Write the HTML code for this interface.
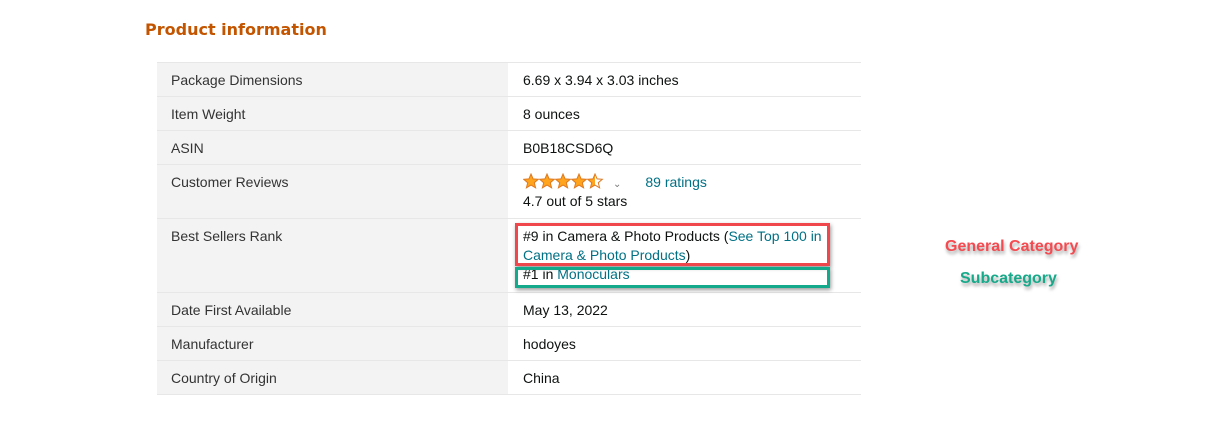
<!DOCTYPE html>
<html><head><style>
body{margin:0;width:1212px;height:424px;background:#fff;font-family:"Liberation Sans",Arial,sans-serif;position:relative;overflow:hidden}
h2{position:absolute;left:145px;top:20px;margin:0;font-size:16px;font-weight:bold;color:#c45500;font-family:"DejaVu Sans","Liberation Sans",sans-serif;letter-spacing:0}
table{position:absolute;left:157px;top:62px;border-collapse:collapse;width:704px;font-size:14px}
td{border-top:1px solid #e7e7e7;border-bottom:1px solid #e7e7e7;vertical-align:top;padding:8px 14px 0 14px;line-height:19px}
td.l{background:#f3f3f3;color:#333;width:323px}
td.v{color:#0f1111;padding-left:15px}
a{color:#007185;text-decoration:none}
.box{position:absolute;border:3px solid;box-shadow:1px 2px 4px rgba(0,0,0,.4)}
.ann{position:absolute;font-weight:bold;font-size:16px;text-shadow:1px 3px 3px rgba(0,0,0,.35)}
</style></head><body>
<h2>Product information</h2>
<table>
<tr style="height:34px"><td class="l">Package Dimensions</td><td class="v">6.69 x 3.94 x 3.03 inches</td></tr>
<tr style="height:34px"><td class="l">Item Weight</td><td class="v">8 ounces</td></tr>
<tr style="height:34px"><td class="l">ASIN</td><td class="v">B0B18CSD6Q</td></tr>
<tr style="height:54px"><td class="l">Customer Reviews</td><td class="v"><div style="height:19px;line-height:19px;white-space:nowrap"><svg width="82" height="17" viewBox="0 0 82 17" style="vertical-align:-3px">
<defs><linearGradient id="h"><stop offset="50%" stop-color="#ffa41c"/><stop offset="50%" stop-color="#fff"/></linearGradient></defs>
<g stroke="#de7921" stroke-width="1">
<path fill="#ffa41c" d="M8 1l2.1 4.9 5.2.4-4 3.4 1.3 5.1L8 12.1l-4.6 2.7 1.3-5.1-4-3.4 5.2-.4z"/>
<path fill="#ffa41c" transform="translate(16 0)" d="M8 1l2.1 4.9 5.2.4-4 3.4 1.3 5.1L8 12.1l-4.6 2.7 1.3-5.1-4-3.4 5.2-.4z"/>
<path fill="#ffa41c" transform="translate(32 0)" d="M8 1l2.1 4.9 5.2.4-4 3.4 1.3 5.1L8 12.1l-4.6 2.7 1.3-5.1-4-3.4 5.2-.4z"/>
<path fill="#ffa41c" transform="translate(48 0)" d="M8 1l2.1 4.9 5.2.4-4 3.4 1.3 5.1L8 12.1l-4.6 2.7 1.3-5.1-4-3.4 5.2-.4z"/>
<path fill="url(#h)" transform="translate(64 0)" d="M8 1l2.1 4.9 5.2.4-4 3.4 1.3 5.1L8 12.1l-4.6 2.7 1.3-5.1-4-3.4 5.2-.4z"/>
</g></svg><span style="color:#777;font-size:10px;margin:0 24px 0 8px">&#8964;</span><a>89 ratings</a></div>4.7 out of 5 stars</td></tr>
<tr style="height:74px"><td class="l">Best Sellers Rank</td><td class="v">#9 in Camera &amp; Photo Products (<a>See Top 100 in Camera &amp; Photo Products</a>)<br><a style="color:#0f1111">#1 in </a><a>Monoculars</a></td></tr>
<tr style="height:34px"><td class="l">Date First Available</td><td class="v">May 13, 2022</td></tr>
<tr style="height:34px"><td class="l">Manufacturer</td><td class="v">hodoyes</td></tr>
<tr style="height:34px"><td class="l">Country of Origin</td><td class="v">China</td></tr>
</table>
<div class="box" style="left:515px;top:223px;width:309px;height:37px;border-color:#f0474d"></div>
<div class="box" style="left:515px;top:267px;width:309px;height:15px;border-color:#14a98a"></div>
<div class="ann" style="left:945px;top:238px;color:#f44a50">General Category</div>
<div class="ann" style="left:960px;top:270px;color:#16a98a">Subcategory</div>
</body></html>
